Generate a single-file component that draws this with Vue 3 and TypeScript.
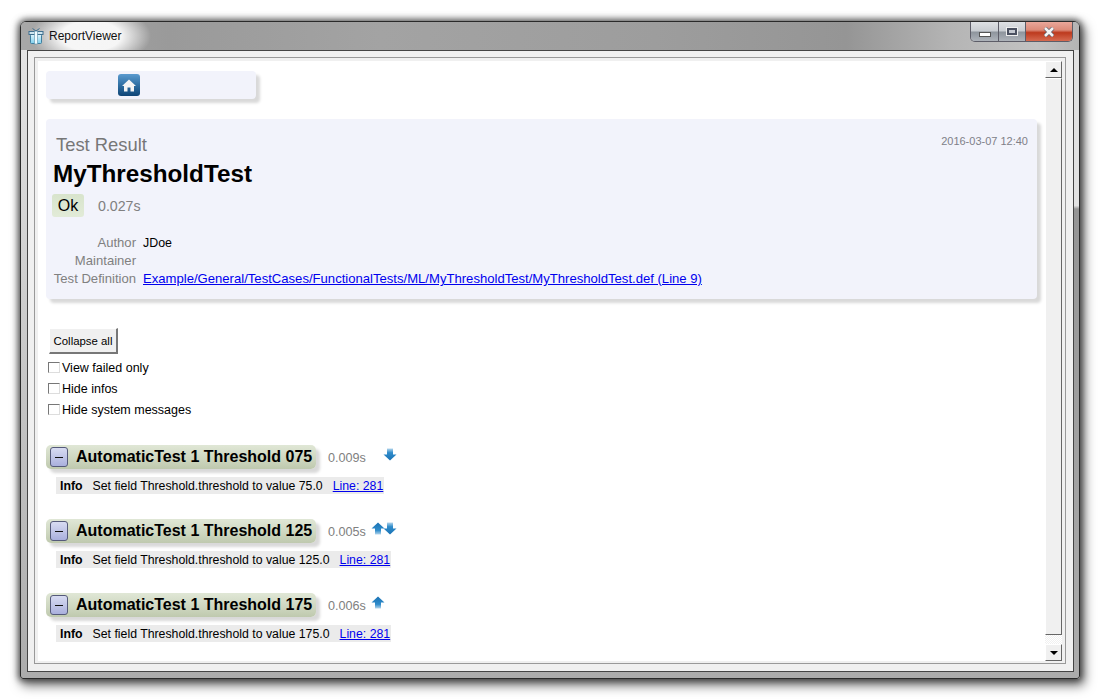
<script setup lang="ts">
interface Test { name: string; time: string; up: boolean; down: boolean; value: string }
const tests: Test[] = [
  { name: 'AutomaticTest 1 Threshold 075', time: '0.009s', up: false, down: true, value: '75.0' },
  { name: 'AutomaticTest 1 Threshold 125', time: '0.005s', up: true, down: true, value: '125.0' },
  { name: 'AutomaticTest 1 Threshold 175', time: '0.006s', up: true, down: false, value: '175.0' },
]
const options = ['View failed only', 'Hide infos', 'Hide system messages']
</script>

<template>
  <div class="desktop">
    <div class="window">
      <div class="titlebar">
        <svg class="appicon" width="16" height="18" viewBox="0 0 16 18">
          <defs>
            <linearGradient id="gift" x1="0" y1="0" x2="0" y2="1"><stop offset="0" stop-color="#dff3fb" /><stop offset="1" stop-color="#7fd0ee" /></linearGradient>
          </defs>
          <rect x="2.5" y="7.5" width="11" height="9" rx="1" fill="url(#gift)" stroke="#3f7f9f" />
          <rect x="1" y="4.5" width="14" height="3" fill="#cfe6f0" stroke="#3f6f8f" />
          <rect x="6.5" y="4" width="3" height="13" fill="#f2fbff" stroke="#5a8fa8" stroke-width=".6" />
          <path d="M8 4 L4.5 1.5 M8 4 L11.5 1.5" stroke="#3f6f8f" fill="none" />
        </svg>
        <span class="apptitle">ReportViewer</span>
        <div class="controls">
          <div class="ctl min"><span class="minglyph"></span></div>
          <div class="ctl max"><span class="maxglyph"></span></div>
          <div class="ctl close">
            <svg width="14" height="10" viewBox="0 0 14 10"><path d="M3 1 L11 9 M11 1 L3 9" stroke="#5c5c6a" stroke-width="4" /><path d="M3 1 L11 9 M11 1 L3 9" stroke="#f4f4f4" stroke-width="2.6" /></svg>
          </div>
        </div>
      </div>

      <div class="client">
        <div class="inset">
          <div class="page">
            <div class="nav">
              <div class="homebtn">
                <svg width="14" height="13" viewBox="0 0 14 13"><path d="M7 0.5 L14 7 H12 V12.5 H8.5 V8.5 H5.5 V12.5 H2 V7 H0 Z" fill="#f4f4f4" /></svg>
              </div>
            </div>

            <section class="card">
              <div class="date">2016-03-07 12:40</div>
              <div class="kicker">Test Result</div>
              <h1 class="title">MyThresholdTest</h1>
              <div class="status">
                <span class="ok">Ok</span>
                <span class="duration">0.027s</span>
              </div>
              <div class="meta">
                <span class="key">Author</span><span class="val">JDoe</span>
                <span class="key">Maintainer</span><span class="val"></span>
                <span class="key">Test Definition</span>
                <a class="link" href="#">Example/General/TestCases/FunctionalTests/ML/MyThresholdTest/MyThresholdTest.def (Line 9)</a>
              </div>
            </section>

            <button class="collapse" type="button">Collapse all</button>
            <label v-for="o in options" :key="o" class="opt"><span class="box"></span>{{ o }}</label>

            <div class="tests">
              <div v-for="t in tests" :key="t.name" class="test">
                <div class="testhead">
                  <div class="pill">
                    <span class="toggle"><span class="dash"></span></span>
                    <span class="tname">{{ t.name }}</span>
                  </div>
                  <span class="ttime">{{ t.time }}</span>
                  <div class="arrows">
                    <svg v-if="t.up" class="arrow" width="14" height="13" viewBox="0 0 14 13">
                      <defs><linearGradient id="au" x1="0" y1="0" x2="0" y2="1"><stop offset="0" stop-color="#1a72b4" /><stop offset=".65" stop-color="#2f8ccb" /><stop offset="1" stop-color="#b5d6ec" /></linearGradient></defs>
                      <path d="M7 0.5 L13.5 6.5 H10 V12.5 H4 V6.5 H0.5 Z" fill="url(#au)" />
                    </svg>
                    <span v-else class="arrowgap"></span>
                    <svg v-if="t.down" class="arrow dn" width="14" height="13" viewBox="0 0 14 13">
                      <defs><linearGradient id="ad" x1="0" y1="0" x2="0" y2="1"><stop offset="0" stop-color="#b5d6ec" /><stop offset=".35" stop-color="#2f8ccb" /><stop offset="1" stop-color="#1a72b4" /></linearGradient></defs>
                      <path d="M4 0.5 H10 V6.5 H13.5 L7 12.5 L0.5 6.5 H4 Z" fill="url(#ad)" />
                    </svg>
                  </div>
                </div>
                <div class="msg">
                  <b class="lvl">Info</b>
                  <span class="txt">Set field Threshold.threshold to value {{ t.value }}</span>
                  <a class="link" href="#">Line: 281</a>
                </div>
              </div>
            </div>
          </div>

          <div class="scrollbar">
            <div class="sbtn"><span class="tri up"></span></div>
            <div class="thumb"></div>
            <div class="dither"></div>
            <div class="sbtn"><span class="tri down"></span></div>
          </div>
        </div>
      </div>
    </div>
  </div>
</template>

<style>
html, body { margin: 0; background: #fff; overflow: hidden; }
</style>

<style scoped>
.desktop {
  width: 1104px;
  height: 699px;
  box-sizing: border-box;
  padding: 21px 24px 20px 20px;
  background: #fff;
  font-family: "Liberation Sans", Arial, sans-serif;
}
.window {
  height: 100%;
  box-sizing: border-box;
  display: flex;
  flex-direction: column;
  padding: 0 5px 6px 6px;
  border: 1px solid #2a2a2a;
  border-radius: 6px 6px 3px 3px;
  background:
    linear-gradient(180deg, #e2e2e2 28%, #959595 28.5%, #acacac 100%) right / 50% 100% no-repeat,
    linear-gradient(180deg, #e6e6e6 0, #acacac 100%) left / 50% 100% no-repeat;
  box-shadow: 0 0 6px 2px rgba(0,0,0,.55), 3px 5px 11px 2px rgba(0,0,0,.5);
}
.titlebar {
  height: 28px;
  flex: none;
  display: flex;
  align-items: center;
  margin: 0 -5px 0 -6px;
  padding: 0 0 0 7px;
  border-radius: 5px 5px 0 0;
  background:
    radial-gradient(ellipse 60px 30px at 70px 14px, rgba(255,255,255,.9) 50%, rgba(255,255,255,0) 100%),
    linear-gradient(90deg, #a8a8a8 0, #9a9a9a 14%, #a3a3a3 34%, #9d9d9d 60%, #959595 78%, #b5b5b5 88%, #c2c2c2 96%, #b4b4b4 100%);
}
.appicon { flex: none; }
.apptitle {
  margin-left: 5px;
  font-size: 12px;
  color: #111;
}
.controls {
  display: flex;
  align-self: flex-start;
  margin-left: auto;
  margin-right: 6px;
  height: 19px;
  border: 1px solid #5d5d68;
  border-top: none;
  border-radius: 0 0 5px 5px;
  overflow: hidden;
}
.ctl { display: flex; align-items: center; justify-content: center; }
.min, .max {
  background: linear-gradient(180deg, #dfe1e4 0, #c8ccd1 48%, #8d949c 52%, #aeb3ba 100%);
  border-right: 1px solid #5d5d68;
}
.min { width: 27px; }
.max { width: 26px; }
.close {
  width: 46px;
  background: linear-gradient(180deg, #e9a79a 0, #dc8a78 42%, #bd3a1e 56%, #d66a50 100%);
}
.minglyph { width: 10px; height: 3px; margin-top: 6px; background: #fff; border: 1px solid #555; }
.maxglyph { width: 6px; height: 3px; border: 2px solid #4a5060; background: #c4c8d0; outline: 1px solid #eee; }

.client {
  flex: 1;
  min-height: 0;
  display: flex;
  box-sizing: border-box;
  border: 1px solid #444;
  background: #f0f0f0;
  padding: 6px 7px 7px 6px;
}
.inset {
  flex: 1;
  min-width: 0;
  display: flex;
  box-sizing: border-box;
  border: 1px solid #999;
  background: #f0f0f0;
  padding: 3px 3px 2px 3px;
}
.page {
  flex: 1;
  min-width: 0;
  box-sizing: border-box;
  background: #fff;
  padding: 10px 8px 0 8px;
  overflow: hidden;
}
.nav {
  width: 210px;
  height: 28px;
  display: flex;
  align-items: center;
  box-sizing: border-box;
  padding-left: 72px;
  background: #f2f3fb;
  border-radius: 4px;
  box-shadow: 4px 4px 3px #d9d9d9;
}
.homebtn {
  width: 22px;
  height: 22px;
  border-radius: 3px;
  display: flex;
  align-items: center;
  justify-content: center;
  background: linear-gradient(180deg, #5b9bcf 0, #2f6fa3 50%, #0f4576 100%);
}
.card {
  position: relative;
  height: 180px;
  margin-top: 20px;
  box-sizing: border-box;
  width: 991px;
  padding: 15px 0 0 7px;
  background: #f2f3fb;
  border-radius: 4px;
  box-shadow: 4px 4px 3px #d9d9d9;
}
.date {
  position: absolute;
  top: 16px;
  right: 9px;
  font-size: 11px;
  color: #808088;
}
.kicker { margin-left: 3px; font-size: 18.4px; line-height: 21px; color: #777; }
.title { margin: 5px 0 0; font-size: 24.25px; line-height: 28px; font-weight: bold; color: #000; }
.status { display: flex; align-items: center; margin-top: 6px; margin-left: -1px; }
.ok {
  box-sizing: border-box;
  width: 32px;
  height: 23px;
  line-height: 23px;
  text-align: center;
  font-size: 16px;
  color: #000;
  background: linear-gradient(180deg, #d8e4cc 0, #e2ebd8 100%);
  border-radius: 3px;
}
.duration { margin-left: 14px; font-size: 14.2px; color: #808080; }
.meta {
  display: grid;
  grid-template-columns: 83px 1fr;
  column-gap: 7px;
  margin-top: 17px;
  font-size: 13.1px;
  line-height: 18px;
}
.key { text-align: right; color: #808080; }
.val { color: #000; min-height: 18px; font-size: 12.4px; }
.link { color: #0000ee; text-decoration: underline; }
.collapse {
  display: block;
  margin: 29px 0 0 3px;
  width: 69px;
  height: 26px;
  padding: 1px 0 0;
  font-family: "Liberation Sans", sans-serif;
  font-size: 11.4px;
  color: #000;
  background: #f0f0f0;
  border: none;
  border-top: 1px solid #fff;
  border-left: 1px solid #fff;
  border-right: 2px solid #777;
  border-bottom: 2px solid #777;
}
.opt {
  display: flex;
  align-items: center;
  height: 21px;
  margin-left: 2px;
  font-size: 12.5px;
  color: #000;
}
.opt:first-of-type { margin-top: 3px; }
.box {
  width: 10px;
  height: 9px;
  margin-right: 2px;
  margin-top: -1px;
  background: #fff;
  border: 1px solid;
  border-color: #777 #ddd #ddd #777;
}
.tests { margin-top: 25px; }
.test { height: 74px; }
.testhead { display: flex; align-items: center; height: 24px; }
.pill {
  box-sizing: border-box;
  width: 270px;
  height: 24px;
  display: flex;
  align-items: center;
  padding-left: 4px;
  background: linear-gradient(180deg, #e0e7d6 0, #cdd6bf 60%, #bfc9ae 100%);
  border-radius: 5px;
  box-shadow: 4px 4px 3px #d9d9d9;
}
.toggle {
  box-sizing: border-box;
  width: 18px;
  height: 20px;
  display: flex;
  align-items: center;
  justify-content: center;
  border: 1px solid #555a7a;
  border-radius: 3px;
  background: linear-gradient(180deg, #d8dcf2 0, #aab0dd 100%);
}
.dash { width: 8px; height: 1px; background: #111; }
.tname { margin-left: 8px; font-size: 16px; font-weight: bold; color: #000; white-space: nowrap; }
.ttime { margin: 2px 0 0 12px; font-size: 12.6px; color: #808080; }
.arrows { display: flex; margin-left: 5px; margin-top: -5px; }
.arrow { display: block; }
.dn { margin-left: -2px; }
.arrowgap { width: 14px; }
.msg {
  display: inline-flex;
  align-items: center;
  height: 17px;
  margin: 8px 0 0 10px;
  padding: 0 1px 0 4px;
  background: #ebebeb;
  font-size: 12.3px;
  color: #000;
}
.lvl { margin-right: 10px; }
.msg .link { margin-left: 10px; }

.scrollbar {
  width: 17px;
  flex: none;
  display: flex;
  flex-direction: column;
  background: #f0f0f0;
}
.sbtn {
  height: 17px;
  flex: none;
  box-sizing: border-box;
  display: flex;
  align-items: center;
  justify-content: center;
  background: #f0f0f0;
  border-top: 1px solid #fff;
  border-left: 1px solid #fff;
  border-right: 1px solid #666;
  border-bottom: 1px solid #666;
}
.thumb {
  flex: 1;
  box-sizing: border-box;
  background: #f0f0f0;
  border-top: 1px solid #fff;
  border-left: 1px solid #fff;
  border-right: 1px solid #666;
  border-bottom: 1px solid #666;
}
.dither {
  height: 9px;
  flex: none;
  background: repeating-conic-gradient(#f0f0f0 0 25%, #fff 0 50%) 0 0 / 2px 2px;
}
.tri { width: 0; height: 0; border-left: 4px solid transparent; border-right: 4px solid transparent; }
.tri.up { border-bottom: 4px solid #000; }
.tri.down { border-top: 4px solid #000; }
</style>
